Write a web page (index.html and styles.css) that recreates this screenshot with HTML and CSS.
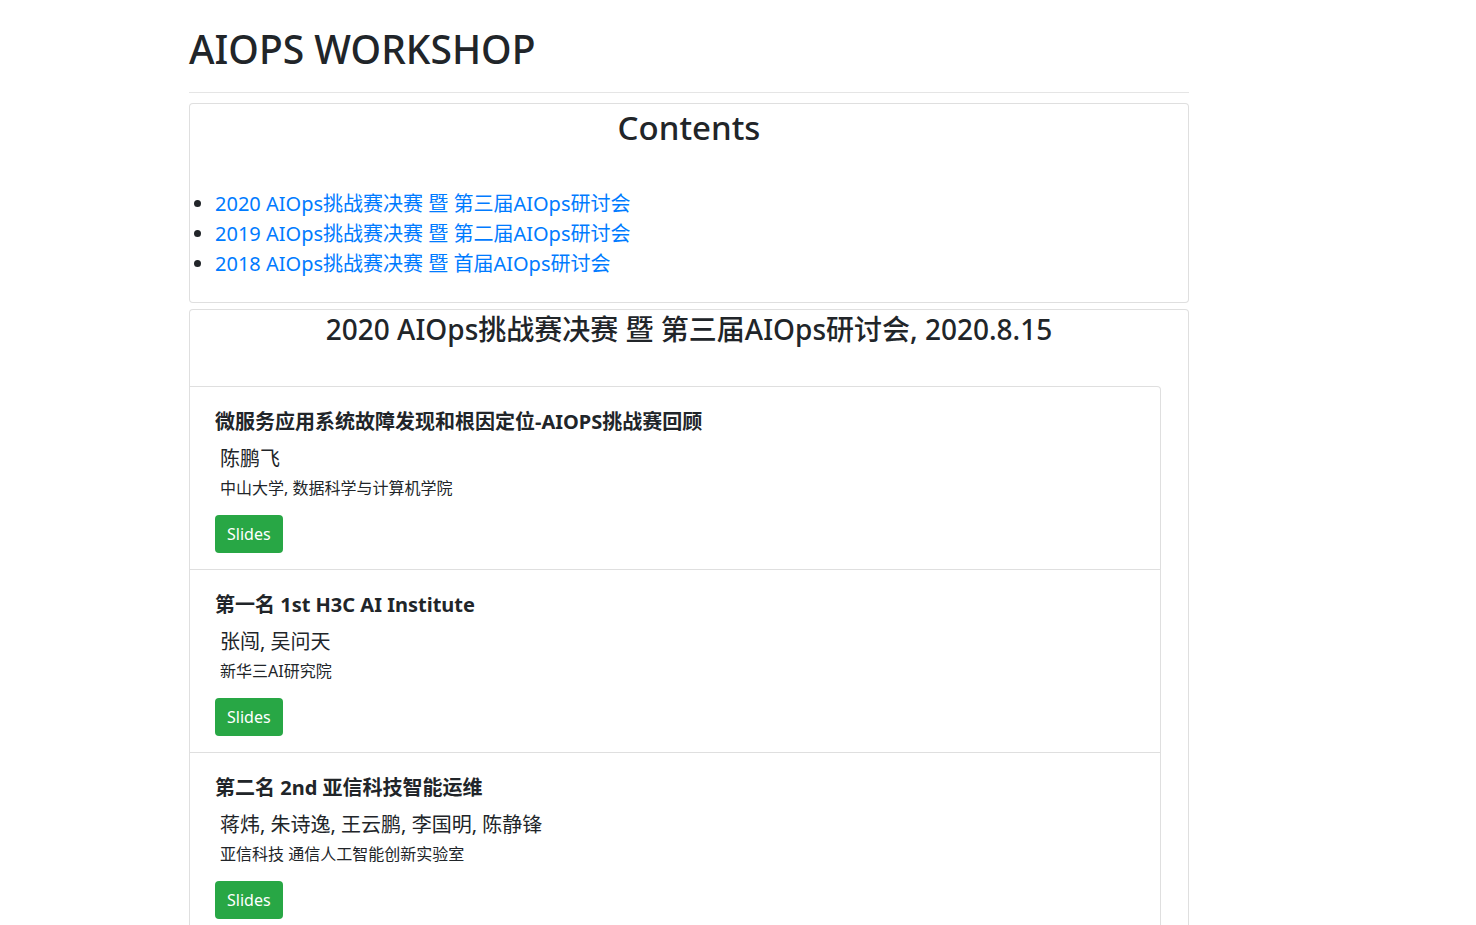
FILE: index.html
```html
<!DOCTYPE html>
<html lang="zh">
<head>
<meta charset="utf-8">
<title>AIOPS WORKSHOP</title>
<link rel="stylesheet" href="styles.css">
</head>
<body>
<div class="page">
  <h1 class="site-title">AIOPS WORKSHOP</h1>
  <hr class="rule">
  <div class="card toc">
    <h2 class="toc-title">Contents</h2>
    <ul class="toc-list">
      <li><a href="#">2020 AIOps挑战赛决赛 暨 第三届AIOps研讨会</a></li>
      <li><a href="#">2019 AIOps挑战赛决赛 暨 第二届AIOps研讨会</a></li>
      <li><a href="#">2018 AIOps挑战赛决赛 暨 首届AIOps研讨会</a></li>
    </ul>
  </div>
  <div class="card event">
    <h3 class="event-title">2020 AIOps挑战赛决赛 暨 第三届AIOps研讨会, 2020.8.15</h3>
    <div class="talks">
      <div class="talk">
        <h5 class="talk-title">微服务应用系统故障发现和根因定位-AIOPS挑战赛回顾</h5>
        <p class="talk-authors">陈鹏飞</p>
        <p class="talk-aff">中山大学, 数据科学与计算机学院</p>
        <a class="btn" href="#">Slides</a>
      </div>
      <div class="talk">
        <h5 class="talk-title">第一名 1st H3C AI Institute</h5>
        <p class="talk-authors">张闯, 吴问天</p>
        <p class="talk-aff">新华三AI研究院</p>
        <a class="btn" href="#">Slides</a>
      </div>
      <div class="talk">
        <h5 class="talk-title">第二名 2nd 亚信科技智能运维</h5>
        <p class="talk-authors">蒋炜, 朱诗逸, 王云鹏, 李国明, 陈静锋</p>
        <p class="talk-aff">亚信科技 通信人工智能创新实验室</p>
        <a class="btn" href="#">Slides</a>
      </div>
    </div>
  </div>
</div>
</body>
</html>
```

FILE: styles.css
```css
html, body {
  margin: 0;
  padding: 0;
  background: #fff;
}
body {
  font-family: "Noto Sans", "Noto Sans CJK SC", sans-serif;
  color: #212529;
  font-size: 16px;
  line-height: 1.5;
}
.page {
  width: 1000px;
  margin-left: 189px;
  padding-top: 26px;
}
.site-title {
  font-size: 39px;
  font-weight: 500;
  line-height: 1.2;
  margin: 0 0 8px;
}
.rule {
  border: 0;
  border-top: 1px solid rgba(0,0,0,.1);
  margin: 19px 0 10px;
}
.card {
  border: 1px solid rgba(0,0,0,.125);
  border-radius: 4px;
  background: #fff;
}
.toc {
  padding-bottom: 23px;
  margin-bottom: 6px;
}
.toc-title {
  text-align: center;
  font-size: 33px;
  font-weight: 500;
  line-height: 1.2;
  margin: 4px 0 42px;
}
.toc-list {
  margin: 0;
  padding-left: 25px;
  font-size: 20px;
  line-height: 30px;
}
.toc-list a {
  color: #007bff;
  text-decoration: none;
}
.event-title {
  text-align: center;
  font-size: 28px;
  font-weight: 500;
  line-height: 1.2;
  margin: 3px 0 39px;
}
.talks {
  width: 971px;
}
.talk {
  border-top: 1px solid rgba(0,0,0,.125);
  border-right: 1px solid rgba(0,0,0,.125);
  padding: 23px 20px 16px 25px;
}
.talks .talk:first-child {
  border-top-right-radius: 4px;
}
.talk-title {
  font-size: 20px;
  font-weight: 700;
  line-height: 24px;
  margin: 0 0 10px;
}
.talk-authors {
  font-size: 20px;
  line-height: 30px;
  margin: 0 0 2px;
  padding-left: 5px;
}
.talk-aff {
  font-size: 16px;
  line-height: 24px;
  margin: 0 0 15px;
  padding-left: 5px;
}
.btn {
  display: inline-block;
  background: #28a745;
  color: #fff;
  border-radius: 4px;
  padding: 6px 12px;
  font-size: 16px;
  line-height: 26px;
  text-decoration: none;
}
```
